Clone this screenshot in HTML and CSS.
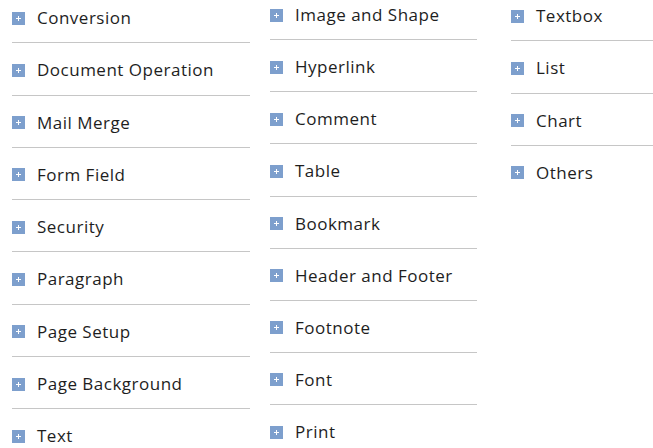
FILE: index.html
```html
<!DOCTYPE html>
<html>
<head>
<meta charset="utf-8">
<link rel="stylesheet" href="styles.css">
</head>
<body>
<div class="cats">
  <ul class="col col1">
    <li><span class="ico"></span>Conversion</li>
    <li><span class="ico"></span>Document Operation</li>
    <li><span class="ico"></span>Mail Merge</li>
    <li><span class="ico"></span>Form Field</li>
    <li><span class="ico"></span>Security</li>
    <li><span class="ico"></span>Paragraph</li>
    <li><span class="ico"></span>Page Setup</li>
    <li><span class="ico"></span>Page Background</li>
    <li><span class="ico"></span>Text</li>
  </ul>
  <ul class="col col2">
    <li><span class="ico"></span>Image and Shape</li>
    <li><span class="ico"></span>Hyperlink</li>
    <li><span class="ico"></span>Comment</li>
    <li><span class="ico"></span>Table</li>
    <li><span class="ico"></span>Bookmark</li>
    <li><span class="ico"></span>Header and Footer</li>
    <li><span class="ico"></span>Footnote</li>
    <li><span class="ico"></span>Font</li>
    <li><span class="ico"></span>Print</li>
  </ul>
  <ul class="col col3">
    <li><span class="ico"></span>Textbox</li>
    <li><span class="ico"></span>List</li>
    <li><span class="ico"></span>Chart</li>
    <li><span class="ico"></span>Others</li>
  </ul>
</div>
</body>
</html>
```
FILE: styles.css
```css
html, body {
  margin: 0;
  padding: 0;
  background: #fff;
  overflow: hidden;
}
.cats {
  display: flex;
  align-items: flex-start;
  padding-left: 12px;
  font-family: "Open Sans", "Noto Sans", sans-serif;
  font-size: 17px;
  letter-spacing: 0.5px;
  color: #1e1e1e;
}
.col {
  list-style: none;
  margin: 0;
  padding: 0;
  flex: none;
}
.col1 { width: 238px; margin-right: 20px; }
.col2 { width: 207px; margin-right: 34px; margin-top: -4px; }
.col3 { width: 150px; margin-top: -2px; }
.col li {
  display: flex;
  align-items: center;
  line-height: 22px;
  height: 22px;
  padding: 16px 0 13.3px;
  border-bottom: 1px solid #c6c6c6;
}
.col2 li { padding-bottom: 13.15px; }
.col li:first-child { padding-top: 7px; }
.col2 li:first-child { padding-top: 8px; }
.col li:last-child { border-bottom: none; }
.ico {
  position: relative;
  width: 13px;
  height: 13px;
  background: #7d9fcd;
  margin-right: 12px;
  flex: none;
}
.ico::before, .ico::after {
  content: "";
  position: absolute;
  background: #fff;
}
.ico::before { left: 4px; top: 6px; width: 5px; height: 1px; }
.ico::after { left: 6px; top: 4px; width: 1px; height: 5px; }
```
